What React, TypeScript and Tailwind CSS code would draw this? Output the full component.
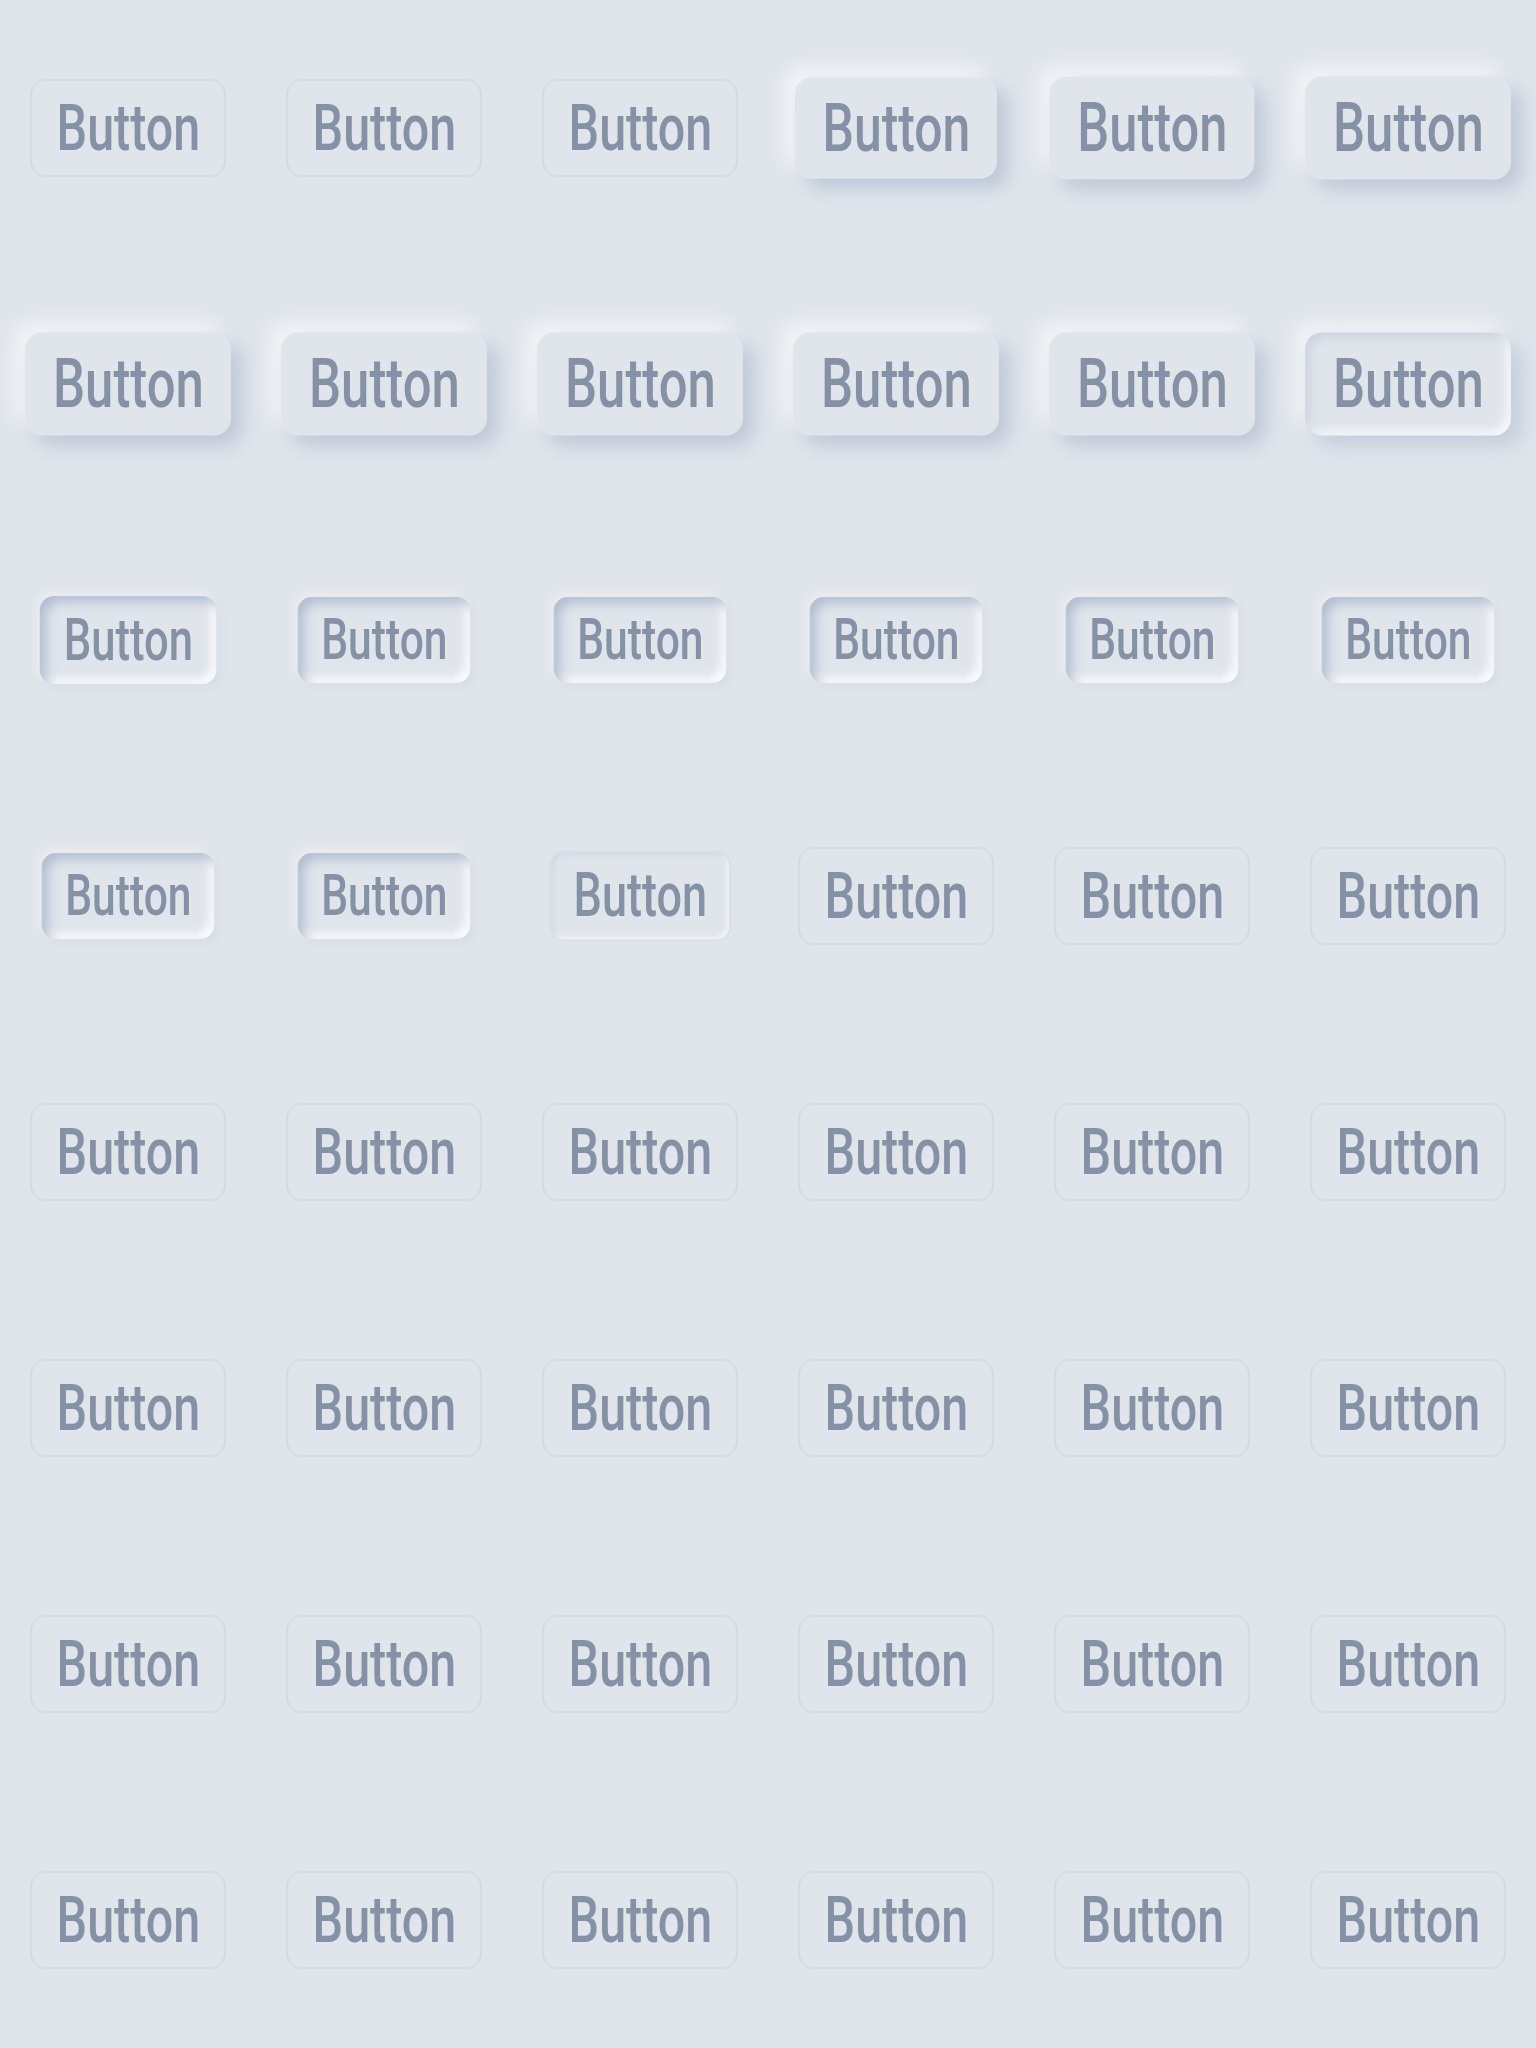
import React from "react";

type Variant = { btn: string };

const NORMAL: Variant = {
  btn: "border-2 border-[#d6dce5]",
};
const RAISED_A: Variant = {
  btn: "scale-[1.03] shadow-[10px_10px_18px_rgba(163,177,198,0.55),-10px_-10px_18px_rgba(255,255,255,0.6)]",
};
const RAISED_B: Variant = {
  btn: "scale-[1.045] shadow-[10px_10px_18px_rgba(163,177,198,0.55),-10px_-10px_18px_rgba(255,255,255,0.6)]",
};
const RAISED: Variant = {
  btn: "scale-[1.05] shadow-[10px_10px_18px_rgba(163,177,198,0.55),-10px_-10px_18px_rgba(255,255,255,0.6)]",
};
const RAISED_INSET: Variant = {
  btn: "scale-[1.05] shadow-[10px_10px_18px_rgba(163,177,198,0.45),-10px_-10px_18px_rgba(255,255,255,0.55),inset_5px_5px_9px_rgba(163,177,198,0.3),inset_-5px_-5px_9px_rgba(255,255,255,0.7)]",
};
const PRESSED: Variant = {
  btn: "scale-[0.9] shadow-[inset_7px_7px_12px_rgba(160,175,198,0.7),inset_-6px_-6px_10px_rgba(255,255,255,0.9),4px_4px_10px_rgba(163,177,198,0.14),-4px_-4px_10px_rgba(255,255,255,0.4)]",
};
const PRESSED_S: Variant = {
  btn: "scale-[0.88] shadow-[inset_7px_7px_12px_rgba(160,175,198,0.7),inset_-6px_-6px_10px_rgba(255,255,255,0.9),4px_4px_10px_rgba(163,177,198,0.14),-4px_-4px_10px_rgba(255,255,255,0.4)]",
};
const SUBTLE: Variant = {
  btn: "scale-[0.93] border-2 border-[#dae0e8] shadow-[inset_3px_3px_6px_rgba(176,188,205,0.3),inset_-3px_-3px_6px_rgba(255,255,255,0.6)]",
};

const rows: Variant[][] = [
  [NORMAL, NORMAL, NORMAL, RAISED_A, RAISED_B, RAISED],
  [RAISED, RAISED, RAISED, RAISED, RAISED, RAISED_INSET],
  [PRESSED, PRESSED_S, PRESSED_S, PRESSED_S, PRESSED_S, PRESSED_S],
  [PRESSED_S, PRESSED_S, SUBTLE, NORMAL, NORMAL, NORMAL],
  [NORMAL, NORMAL, NORMAL, NORMAL, NORMAL, NORMAL],
  [NORMAL, NORMAL, NORMAL, NORMAL, NORMAL, NORMAL],
  [NORMAL, NORMAL, NORMAL, NORMAL, NORMAL, NORMAL],
  [NORMAL, NORMAL, NORMAL, NORMAL, NORMAL, NORMAL],
];

function NeuButton({ v }: { v: Variant }) {
  return (
    <button
      type="button"
      className={`flex h-[98px] w-[196px] items-center justify-center rounded-[16px] bg-[#e0e5ec] ${v.btn}`}
    >
      <span
        className="inline-block scale-x-[0.745] text-[65px] font-medium leading-none text-[#8591a4]"
        style={{ fontFamily: 'Roboto, "Liberation Sans", sans-serif' }}
      >
        Button
      </span>
    </button>
  );
}

export default function App() {
  return (
    <div className="min-h-screen w-full bg-[#e0e5ec]">
      <div className="grid grid-cols-6">
        {rows.flatMap((row, r) =>
          row.map((v, c) => (
            <div key={`${r}-${c}`} className="flex h-[256px] items-center justify-center">
              <NeuButton v={v} />
            </div>
          ))
        )}
      </div>
    </div>
  );
}
